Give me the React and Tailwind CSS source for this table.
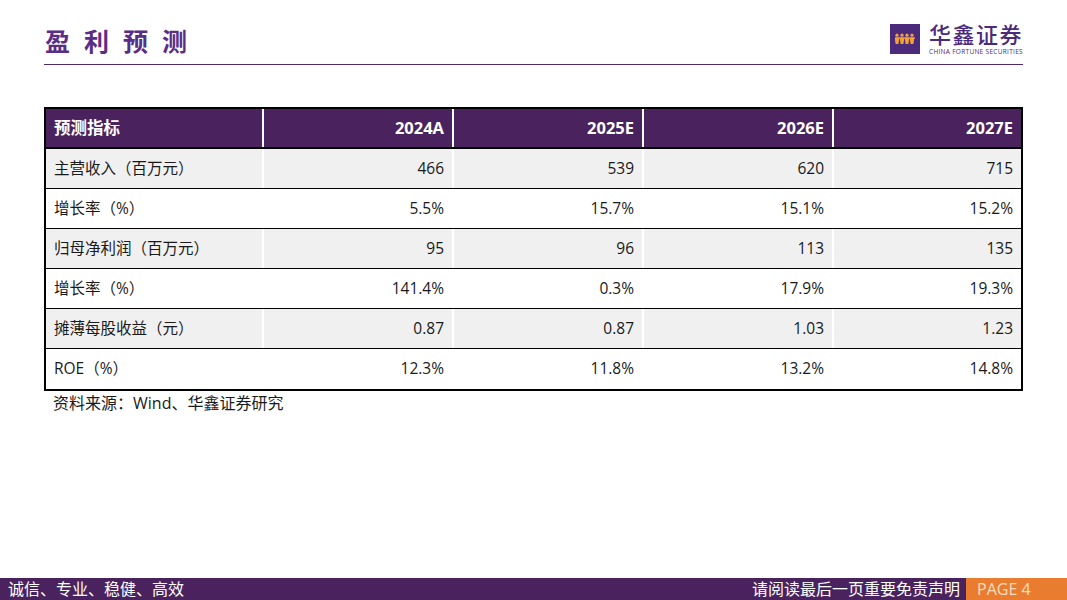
const FONT = {
  fontFamily: '"Open Sans", "Noto Sans CJK SC", sans-serif',
};

const rows = [
  { label: "主营收入（百万元）", values: ["466", "539", "620", "715"] },
  { label: "增长率（%）", values: ["5.5%", "15.7%", "15.1%", "15.2%"] },
  { label: "归母净利润（百万元）", values: ["95", "96", "113", "135"] },
  { label: "增长率（%）", values: ["141.4%", "0.3%", "17.9%", "19.3%"] },
  { label: "摊薄每股收益（元）", values: ["0.87", "0.87", "1.03", "1.23"] },
  { label: "ROE（%）", values: ["12.3%", "11.8%", "13.2%", "14.8%"] },
];

const years = ["2024A", "2025E", "2026E", "2027E"];

const Logo = () => (
  <div className="flex items-center gap-[9px]">
    <div className="w-[30px] h-[30px] bg-[#4b2a7b] flex items-center justify-center">
      <svg width="20" height="12" viewBox="0 0 20 12">
        {[2, 7, 12, 17].map((x) => (
          <g key={x} fill="#f2a23a">
            <circle cx={x} cy="2.2" r="1.6" />
            <path d={`M${x - 2.4} 4.5 L${x + 2.4} 4.5 L${x + 1.4} 11 L${x - 1.4} 11 Z`} />
          </g>
        ))}
        <path d="M0 5 L20 5" stroke="#f2a23a" strokeWidth="1.2" />
      </svg>
    </div>
    <div className="flex flex-col">
      <span className="text-[22px] leading-[24px] text-[#4b2a7b] font-medium tracking-[1.5px]">
        华鑫证券
      </span>
      <span className="text-[6.5px] leading-[8px] mt-[2px] text-[#4b2a7b] tracking-[0.3px]">
        CHINA FORTUNE SECURITIES
      </span>
    </div>
  </div>
);

const App = () => {
  return (
    <div className="w-[1067px] h-[600px] bg-white flex flex-col" style={FONT}>
      <div className="flex items-end justify-between pt-[22px] pb-[8px] border-b border-[#4b2a70] mx-[44px]">
        <h1 className="pl-[1px] text-[25px] leading-[30px] font-bold text-[#5a2d86] tracking-[14px]">
          盈利预测
        </h1>
        <Logo />
      </div>

      <div className="mx-[44px] mt-[42px] border-2 border-black text-[15.5px] text-[#1a1a1a]">
        <div className="grid grid-cols-[216px_190px_190px_190px_1fr] h-[40px] bg-[#4a235e] text-white text-[16.5px] font-bold border-b-2 border-black">
          <div className="flex items-center pl-[8px]">预测指标</div>
          {years.map((y) => (
            <div
              key={y}
              className="flex items-center justify-end pr-[8px] border-l-2 border-white"
            >
              {y}
            </div>
          ))}
        </div>
        {rows.map((row, i) => (
          <div
            key={i}
            className={`grid grid-cols-[216px_190px_190px_190px_1fr] h-[40px] ${
              i < rows.length - 1 ? "border-b-[1.5px] border-black" : ""
            } ${i % 2 === 0 ? "bg-[#f0f0f0]" : "bg-white"}`}
          >
            <div className="flex items-center pl-[8px]">{row.label}</div>
            {row.values.map((v, j) => (
              <div
                key={j}
                className={`flex items-center justify-end pr-[8px] ${
                  i % 2 === 0 ? "border-l-2 border-white" : ""
                }`}
              >
                {v}
              </div>
            ))}
          </div>
        ))}
      </div>
      <div className="ml-[53px] mt-[1px] text-[16px] leading-[22px] text-[#1a1a1a]">
        资料来源：Wind、华鑫证券研究
      </div>

      <div className="mt-auto h-[22px] bg-[#4a235e] flex items-center text-[16px] leading-[22px]">
        <span className="pl-[8px] text-white">诚信、专业、稳健、高效</span>
        <span className="ml-auto text-white pr-[6px]">请阅读最后一页重要免责声明</span>
        <span className="w-[101px] h-full bg-[#e97c2f] text-[#f8dcc0] pl-[11px]">
          PAGE 4
        </span>
      </div>
    </div>
  );
};

export default App;
